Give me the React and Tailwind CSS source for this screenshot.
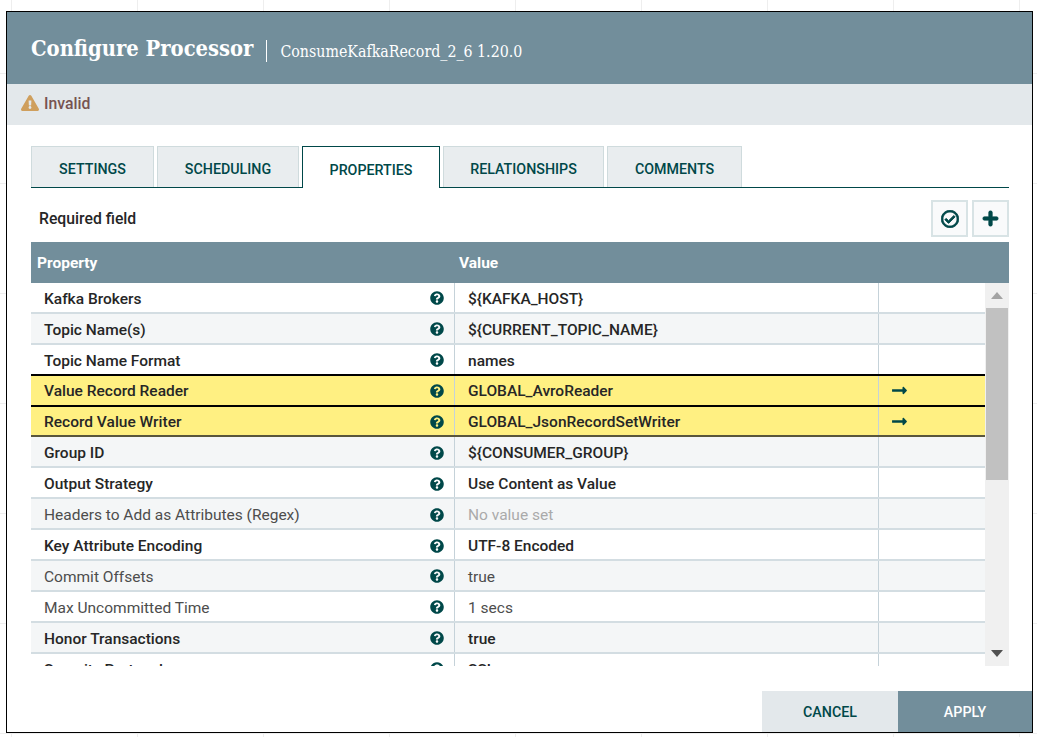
import React from 'react';
import { FaQuestionCircle, FaRegCheckCircle, FaPlus, FaExclamationTriangle, FaLongArrowAltRight } from 'react-icons/fa';

const tabs = [
  { name: 'SETTINGS', width: 'w-[123px]' },
  { name: 'SCHEDULING', width: 'w-[142px]' },
  { name: 'PROPERTIES', width: 'w-[138px]', active: true },
  { name: 'RELATIONSHIPS', width: 'w-[161px]' },
  { name: 'COMMENTS', width: 'w-[135px]' },
];

const rows = [
  { name: 'Kafka Brokers', value: '${KAFKA_HOST}', bold: true },
  { name: 'Topic Name(s)', value: '${CURRENT_TOPIC_NAME}', bold: true },
  { name: 'Topic Name Format', value: 'names', bold: true },
  { name: 'Value Record Reader', value: 'GLOBAL_AvroReader', bold: true, service: true },
  { name: 'Record Value Writer', value: 'GLOBAL_JsonRecordSetWriter', bold: true, service: true },
  { name: 'Group ID', value: '${CONSUMER_GROUP}', bold: true },
  { name: 'Output Strategy', value: 'Use Content as Value', bold: true },
  { name: 'Headers to Add as Attributes (Regex)', value: 'No value set', unset: true },
  { name: 'Key Attribute Encoding', value: 'UTF-8 Encoded', bold: true },
  { name: 'Commit Offsets', value: 'true' },
  { name: 'Max Uncommitted Time', value: '1 secs' },
  { name: 'Honor Transactions', value: 'true', bold: true },
  { name: 'Security Protocol', value: 'SSL', bold: true },
];

function Row({ row, index }) {
  const bg = row.service ? 'bg-[#fff082]' : index % 2 === 1 ? 'bg-[#f4f6f7]' : 'bg-white';
  let border = 'border-b-2 border-[#d3dde2]';
  if (index === 2) border = 'border-b-2 border-black';
  if (index === 3) border = 'border-b-2 border-black';
  if (index === 4) border = 'border-b-2 border-[#59563c]';

  return (
    <div className={`flex h-[30.9px] shrink-0 items-center text-[15.5px] text-[#262626] ${bg} ${border} ${row.bold ? 'font-medium' : 'font-normal'}`}>
      <div className="flex h-full w-[423px] shrink-0 items-center justify-between pl-[13px] pr-[10px]">
        <span className={`mt-[4px] ${row.bold ? '' : 'text-[#4d4d4d]'}`}>{row.name}</span>
        <FaQuestionCircle className="mt-[2px] text-[14px] text-[#004849]" />
      </div>
      <div className="flex h-full w-[424px] shrink-0 items-center border-l border-[#c5d2d9] pl-[13px]">
        <span className={`mt-[4px] ${row.unset ? 'text-[#aaaaaa]' : row.bold ? '' : 'text-[#4d4d4d]'}`}>{row.value}</span>
      </div>
      <div className="flex h-full flex-1 items-center border-l border-[#c5d2d9] pl-[12px]">
        {row.service && <FaLongArrowAltRight className="text-[17px] text-[#004849]" />}
      </div>
    </div>
  );
}

export default function App() {
  return (
    <div className="h-[737px] w-[1037px] overflow-hidden bg-white bg-[linear-gradient(to_right,#eeeeee_1px,transparent_1px),linear-gradient(to_bottom,#eeeeee_1px,transparent_1px)] bg-[size:126px_110px] bg-[position:11px_73px] pl-[6px] pt-[11px] font-['Roboto',sans-serif]">
      <div className="flex h-[722px] w-[1027px] flex-col border border-black bg-white">
        <header className="flex h-[72px] shrink-0 items-center bg-[#728e9b] pl-[24px] text-white">
          <h1 className="mt-[2px] font-['DejaVu_Serif_Condensed','DejaVu_Serif',serif] text-[21.75px] font-bold">Configure Processor</h1>
          <span className="ml-[13px] mr-[13px] mt-[5px] h-[22px] w-px bg-white" />
          <span className="mt-[8px] font-['DejaVu_Serif_Condensed','DejaVu_Serif',serif] text-[15.8px]">ConsumeKafkaRecord_2_6 1.20.0</span>
        </header>

        <div className="flex h-[41px] shrink-0 items-center gap-[5px] bg-[#e3e8eb] pb-[1px] pl-[14px] text-[15.75px] font-medium text-[#775351]">
          <FaExclamationTriangle className="mb-[2px] text-[18px] text-[#cf9f5d]" />
          <span>Invalid</span>
        </div>

        <div className="flex flex-1 flex-col pl-[24px] pr-[23px] pt-[21px]">
          <nav className="flex h-[42px] shrink-0 gap-[3px] border-b border-[#004849]">
            {tabs.map((tab) => (
              <div
                key={tab.name}
                className={
                  tab.active
                    ? `-mb-px flex h-[42px] items-center justify-center border border-b-0 border-[#004849] bg-white pt-[6px] text-[14.25px] font-medium text-[#004849] ${tab.width}`
                    : `flex h-[41px] items-center justify-center border border-b-0 border-[#cfdbdd] bg-[#e9edef] pt-[6px] text-[14.25px] font-medium text-[#004849] ${tab.width}`
                }
              >
                {tab.name}
              </div>
            ))}
          </nav>

          <div className="flex h-[54px] shrink-0 items-center justify-between pl-[8px] pt-[7px]">
            <span className="text-[15.75px] font-medium text-[#262626]">Required field</span>
            <div className="flex gap-[4px]">
              <button className="flex h-[37px] w-[37px] items-center justify-center border-2 border-[#d8e3e5] bg-[#f9fafb]">
                <FaRegCheckCircle className="text-[18px] text-[#004849]" stroke="currentColor" strokeWidth="24" />
              </button>
              <button className="flex h-[37px] w-[37px] items-center justify-center border-2 border-[#d8e3e5] bg-[#f9fafb]">
                <FaPlus className="text-[17px] text-[#004849]" stroke="currentColor" strokeWidth="30" />
              </button>
            </div>
          </div>

          <div className="flex h-[41px] shrink-0 items-center bg-[#728e9b] pt-[2px] text-[15.5px] font-bold text-white">
            <span className="w-[428px] pl-[6px]">Property</span>
            <span>Value</span>
          </div>

          <div className="flex h-[383px] shrink-0">
            <div className="flex w-[954px] flex-col overflow-hidden">
              {rows.map((row, index) => (
                <Row key={row.name} row={row} index={index} />
              ))}
            </div>
            <div className="flex w-[24px] flex-col bg-[#f0f0f0]">
              <div className="flex h-[25px] items-center justify-center">
                <svg width="12" height="7" viewBox="0 0 14 8"><path d="M7 0l7 8H0z" fill="#a3a3a3" /></svg>
              </div>
              <div className="mx-px h-[172px] bg-[#c1c1c1]" />
              <div className="flex flex-1 items-end justify-center pb-[9px]">
                <svg width="12" height="7" viewBox="0 0 14 8"><path d="M0 0h14L7 8z" fill="#505050" /></svg>
              </div>
            </div>
          </div>

          <div className="flex-1" />
        </div>

        <footer className="flex h-[41px] shrink-0 justify-end text-[14.25px] font-medium">
          <button className="w-[136px] bg-[#e3e8eb] pt-[2px] text-[#004849]">CANCEL</button>
          <button className="w-[134px] bg-[#728e9b] pt-[2px] text-white">APPLY</button>
        </footer>
      </div>
    </div>
  );
}
